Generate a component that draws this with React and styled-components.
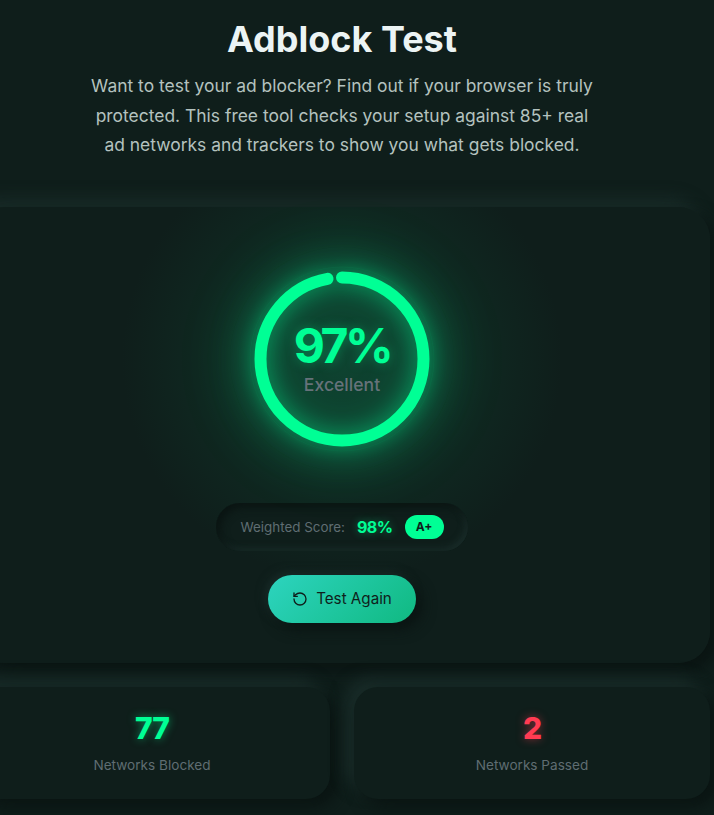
import React from "react";
import styled, { createGlobalStyle } from "styled-components";
import { RotateCcw } from "lucide-react";

const Global = createGlobalStyle`
  html, body {
    margin: 0;
    height: 815px;
    overflow: hidden;
    background: #0f1e1b;
    font-family: Inter, "Liberation Sans", sans-serif;
  }
`;

const Page = styled.div`
  width: 736px;
  margin-left: -26px;
  padding-top: 18px;
`;

const Header = styled.header`
  text-align: center;
  margin-bottom: 47px;

  h1 {
    margin: 0 0 10px;
    font-size: 36px;
    line-height: 43px;
    font-weight: 700;
    color: #ecf4f4;
  }

  p {
    width: 510px;
    margin: 0 auto;
    font-size: 17.45px;
    line-height: 29.5px;
    color: #b4c2bf;
  }
`;

const Card = styled.section`
  background: #0f1e1b;
  border-radius: 32px;
  box-shadow: 8px 8px 16px #0a1412, -8px -8px 16px #1a2d2a;
`;

const ScoreCard = styled(Card)`
  height: 456px;
  padding-top: 40px;
  box-sizing: border-box;
  display: flex;
  flex-direction: column;
  align-items: center;
  background: radial-gradient(circle at 50% 152px, #0f3a2c 0, #0f2a22 120px, #0f1e1b 220px);
`;

const Dial = styled.div`
  position: relative;
  width: 224px;
  height: 224px;
  border-radius: 50%;
  display: flex;
  flex-direction: column;
  align-items: center;
  justify-content: center;
  background: rgba(0, 255, 150, 0.05);
  box-shadow: 0 0 60px rgba(0, 255, 150, 0.1);

  svg {
    position: absolute;
    inset: 0;
    filter: drop-shadow(0 0 10px rgba(0, 255, 150, 0.5)) drop-shadow(0 0 20px rgba(0, 255, 150, 0.4));
  }
`;

const Percent = styled.div`
  position: relative;
  font-size: 48px;
  line-height: 56px;
  font-weight: 700;
  letter-spacing: -3.4px;
  color: #00ff95;
  text-shadow: 0 0 12px rgba(0, 255, 150, 0.35);
`;

const Rating = styled.div`
  position: relative;
  font-size: 17.6px;
  line-height: 22px;
  font-weight: 500;
  color: #66727a;
  margin-bottom: 3px;
`;

const ScorePill = styled.div`
  display: flex;
  align-items: center;
  height: 48px;
  margin-top: 32px;
  padding: 0 24px;
  border-radius: 24px;
  background: #0f1e1b;
  box-shadow: inset 4px 4px 8px #0a1412, inset -3px -3px 6px #1a2d2a;
`;

const ScoreLabel = styled.span`
  font-size: 13.4px;
  color: #5f6d72;
  margin-right: 12px;
`;

const ScoreValue = styled.span`
  font-size: 16px;
  font-weight: 700;
  letter-spacing: -0.5px;
  color: #00ff95;
  text-shadow: 0 0 8px rgba(0, 255, 150, 0.4);
  margin-right: 12px;
`;

const Grade = styled.span`
  display: flex;
  align-items: center;
  justify-content: center;
  width: 39px;
  height: 24px;
  border-radius: 12px;
  background: #00ff95;
  color: #0f1e1b;
  font-size: 12px;
  font-weight: 700;
`;

const Retry = styled.button`
  display: flex;
  align-items: center;
  justify-content: center;
  gap: 8px;
  width: 148px;
  height: 48px;
  margin-top: 24px;
  border: 0;
  border-radius: 24px;
  background: linear-gradient(135deg, #2dd4bf, #10b981);
  color: #0f1e1b;
  font-family: inherit;
  font-size: 15.2px;
  font-weight: 400;
  box-shadow: 6px 6px 14px #0a1412, -3px -3px 10px #1a2d2a;
`;

const Stats = styled.div`
  display: grid;
  grid-template-columns: 1fr 1fr;
  gap: 24px;
  margin-top: 24px;
`;

const StatCard = styled(Card)`
  height: 112px;
  border-radius: 24px;
  display: flex;
  flex-direction: column;
  align-items: center;
  padding-top: 23px;
  box-sizing: border-box;
`;

const StatValue = styled.div`
  font-size: 30px;
  line-height: 36px;
  font-weight: 800;
  letter-spacing: -1px;
  color: ${(p) => p.$color};
  text-shadow: 0 0 8px ${(p) => p.$color}80;
`;

const StatLabel = styled.div`
  margin-top: 10px;
  font-size: 13.6px;
  line-height: 18px;
  color: #5f6d72;
`;

const R = 81.5;
const C = 2 * Math.PI * R;

export default function App() {
  return (
    <Page>
      <Global />
      <Header>
        <h1>Adblock Test</h1>
        <p>
          Want to test your ad blocker? Find out if your browser is truly
          protected. This free tool checks your setup against 85+ real ad
          networks and trackers to show you what gets blocked.
        </p>
      </Header>
      <ScoreCard>
        <Dial>
          <svg width="224" height="224" viewBox="0 0 224 224">
            <circle cx="112" cy="112" r="92" fill="none" stroke="rgba(0,255,150,0.04)" strokeWidth="1" />
            <circle
              cx="112"
              cy="112"
              r={R}
              fill="none"
              stroke="#00ff95"
              strokeWidth="12"
              strokeLinecap="round"
              strokeDasharray={`${C * 0.97} ${C}`}
              transform="rotate(-90 112 112)"
            />
          </svg>
          <Percent>97%</Percent>
          <Rating>Excellent</Rating>
        </Dial>
        <ScorePill>
          <ScoreLabel>Weighted Score:</ScoreLabel>
          <ScoreValue>98%</ScoreValue>
          <Grade>A+</Grade>
        </ScorePill>
        <Retry>
          <RotateCcw size={16} strokeWidth={2} />
          Test Again
        </Retry>
      </ScoreCard>
      <Stats>
        <StatCard>
          <StatValue $color="#00ff95">77</StatValue>
          <StatLabel>Networks Blocked</StatLabel>
        </StatCard>
        <StatCard>
          <StatValue $color="#ff3b52">2</StatValue>
          <StatLabel>Networks Passed</StatLabel>
        </StatCard>
      </Stats>
    </Page>
  );
}
